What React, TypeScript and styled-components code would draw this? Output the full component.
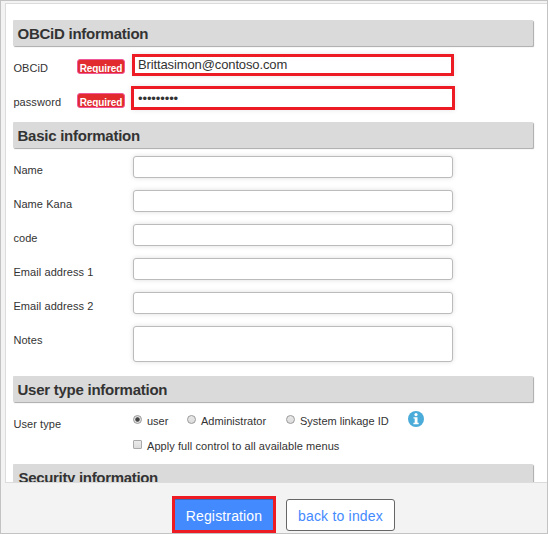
import React from "react";
import styled, { createGlobalStyle } from "styled-components";

const GlobalStyle = createGlobalStyle`
  * { box-sizing: border-box; }
  body { margin: 0; background: #f3f3f3; color: #333; font-family: "Liberation Sans", Arial, sans-serif; }
`;

const Page = styled.div`
  width: 548px;
  height: 534px;
  padding: 2px 0 0 4px;
  display: flex;
  flex-direction: column;
  overflow: hidden;
  background: #f3f3f3;
  border: 1px solid #c3c3c3;
`;

const Panel = styled.main`
  flex: none;
  height: 480px;
  padding: 16px 14px 0 7px;
  overflow: hidden;
  background: #fff;
  border: 1px solid #dcdcdc;
  border-right: 0;
`;

const Heading = styled.h2<{ $spacing?: number; $indent?: number }>`
  height: 26px;
  margin: 0 0 8px;
  padding-left: ${(p) => p.$indent ?? 4.5}px;
  background: #dadada;
  box-shadow: 1px 1px 1px #aaa;
  border-radius: 1px;
  font-size: 15px;
  font-weight: 700;
  line-height: 28px;
  letter-spacing: ${(p) => p.$spacing ?? -0.25}px;
  white-space: nowrap;
`;

const Row = styled.div<{ $height?: number }>`
  display: flex;
  align-items: flex-start;
  height: ${(p) => p.$height ?? 34}px;
`;

const Label = styled.label`
  flex: none;
  width: 64px;
  padding: 8px 0 0 0.4px;
  font-size: 11px;
  line-height: 13px;
  letter-spacing: 0.08px;
  white-space: nowrap;
`;

const BadgeSlot = styled.div`
  flex: none;
  width: 56px;
  padding-top: 5px;
`;

const Badge = styled.span`
  display: block;
  width: 48px;
  height: 15px;
  overflow: hidden;
  background: #e12b2e;
  border: 1px solid #f0569a;
  border-radius: 3px;
  color: #fff;
  font-size: 10px;
  font-weight: 700;
  line-height: 17px;
  text-align: center;
  letter-spacing: -0.1px;
`;

const Field = styled.input<{ $height?: number }>`
  flex: none;
  width: 320px;
  height: ${(p) => p.$height ?? 22}px;
  padding: 0 4px;
  background: #fff;
  border: 1px solid #bbb;
  border-radius: 3px;
  outline: 0;
  box-shadow: 0 0 5px rgba(0, 0, 0, 0.13);
`;

const MarkedField = styled.input<{ $grow: number }>`
  flex: none;
  width: ${(p) => 322 + p.$grow * 2}px;
  height: ${(p) => 22 + p.$grow * 2}px;
  margin: ${(p) => `${-p.$grow * 2}px 0 0 ${-1 - p.$grow}px`};
  padding: ${(p) => (p.$grow ? "0 0 0 4px" : "0 0 1px 3px")};
  background: #fff;
  border: 3px solid #ed1c24;
  outline: 0;
  box-shadow: 0 0 5px rgba(0, 0, 0, 0.1);
  color: #333;
  font-family: "Liberation Sans", Arial, sans-serif;
  font-size: 13px;
  letter-spacing: ${(p) => (p.$grow ? -0.1 : -0.12)}px;
`;

const Options = styled.div`
  padding-top: 4px;
`;

const OptionRow = styled.div`
  display: flex;
  align-items: flex-start;
  height: 25px;
`;

const Option = styled.label<{ $width: number; $spacing?: number }>`
  display: flex;
  width: ${(p) => p.$width}px;
  font-size: 11px;
  line-height: 13px;
  letter-spacing: ${(p) => p.$spacing ?? 0}px;
  white-space: nowrap;
`;

const Radio = styled.i<{ $on?: boolean }>`
  flex: none;
  width: 9px;
  height: 9px;
  margin: 1px 5px 0 0;
  border: 1px solid #999;
  border-radius: 50%;
  background: ${(p) =>
    p.$on
      ? "radial-gradient(circle, #444 0 1.8px, #e0e0e0 2.6px)"
      : "linear-gradient(#e8e8e8, #dcdcdc)"};
`;

const Checkbox = styled.i`
  flex: none;
  width: 9px;
  height: 9px;
  margin: 1px 5px 0 0;
  border: 1px solid #aaa;
  border-radius: 1px;
  background: linear-gradient(#ebebeb, #dcdcdc);
`;

const OptionText = styled.span`
  padding-top: 1px;
`;

const InfoIcon = styled.svg`
  flex: none;
  width: 16px;
  height: 16px;
  margin-top: -3px;
`;

const Footer = styled.footer`
  display: flex;
  align-items: flex-start;
  gap: 10px;
  padding: 13px 0 0 167px;
`;

const PrimaryButton = styled.button`
  width: 104px;
  height: 37px;
  padding: 3px 0 0;
  background: #448aff;
  border: 3px solid #ed1c24;
  color: #fff;
  font-family: "Liberation Sans", Arial, sans-serif;
  font-size: 14px;
  letter-spacing: 0.15px;
  box-shadow: inset 0 1px 0 #346cbf;
`;

const SecondaryButton = styled.button`
  width: 109px;
  height: 32px;
  margin-top: 3px;
  padding: 2px 0 0;
  background: #fff;
  border: 1px solid #666;
  border-radius: 3px;
  color: #448aff;
  font-family: "Liberation Sans", Arial, sans-serif;
  font-size: 14px;
  letter-spacing: 0.2px;
`;

const basicFields = ["Name", "Name Kana", "code", "Email address 1", "Email address 2"];

export default function App() {
  return (
    <>
      <GlobalStyle />
      <Page>
        <Panel>
          <Heading>OBCiD information</Heading>
          <Row>
            <Label>OBCiD</Label>
            <BadgeSlot><Badge>Required</Badge></BadgeSlot>
            <MarkedField $grow={0} defaultValue="Brittasimon@contoso.com" />
          </Row>
          <Row>
            <Label>password</Label>
            <BadgeSlot><Badge>Required</Badge></BadgeSlot>
            <MarkedField $grow={1} defaultValue="•••••••••" />
          </Row>

          <Heading>Basic information</Heading>
          {basicFields.map((label) => (
            <Row key={label}>
              <Label>{label}</Label>
              <BadgeSlot />
              <Field />
            </Row>
          ))}
          <Row $height={50}>
            <Label>Notes</Label>
            <BadgeSlot />
            <Field $height={36} />
          </Row>

          <Heading>User type information</Heading>
          <Row $height={54}>
            <Label>User type</Label>
            <BadgeSlot />
            <Options>
              <OptionRow>
                <Option $width={54}><Radio $on /><OptionText>user</OptionText></Option>
                <Option $width={99} $spacing={0.03}><Radio /><OptionText>Administrator</OptionText></Option>
                <Option $width={122}><Radio /><OptionText>System linkage ID</OptionText></Option>
                <InfoIcon viewBox="0 0 16 16">
                  <circle cx="8" cy="8" r="8" fill="#4bacd9" />
                  <circle cx="8" cy="3.6" r="1.6" fill="#fff" />
                  <path d="M5.5 6.2h4v5.6h1.2v1.4H5.4v-1.4h1.3V7.6H5.5z" fill="#fff" />
                </InfoIcon>
              </OptionRow>
              <OptionRow>
                <Option $width={220} $spacing={0.07}><Checkbox /><OptionText>Apply full control to all available menus</OptionText></Option>
              </OptionRow>
            </Options>
          </Row>

          <Heading $indent={5.5} $spacing={-0.32}>Security information</Heading>
        </Panel>
        <Footer>
          <PrimaryButton>Registration</PrimaryButton>
          <SecondaryButton>back to index</SecondaryButton>
        </Footer>
      </Page>
    </>
  );
}
